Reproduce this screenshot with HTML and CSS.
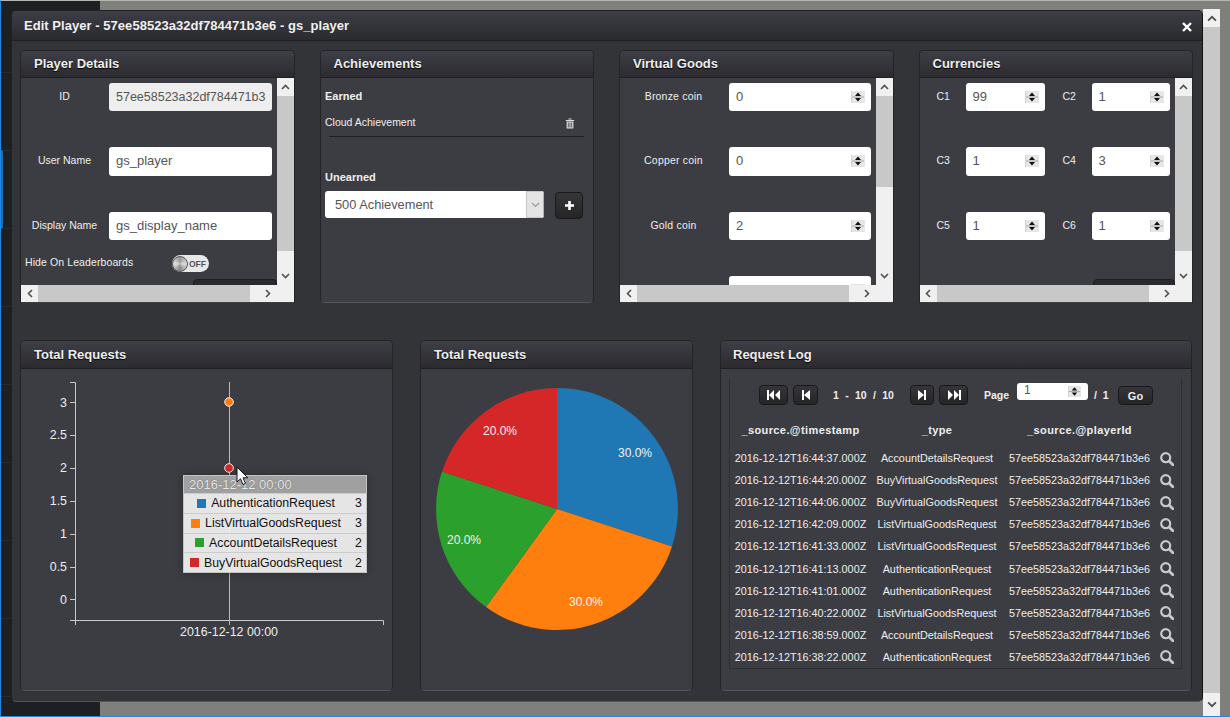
FILE: index.html
```html
<!DOCTYPE html>
<html lang="en">
<head>
<meta charset="utf-8">
<title>Edit Player</title>
<link rel="stylesheet" href="styles.css">
</head>
<body>
<svg class="defs" width="0" height="0" aria-hidden="true">
  <defs>
    <symbol id="up" viewBox="0 0 9 6"><path d="M1 5 4.500 1.500 8 5" fill="none" stroke="#505050" stroke-width="1.600"/></symbol>
    <symbol id="down" viewBox="0 0 9 6"><path d="M1 1 4.500 4.500 8 1" fill="none" stroke="#505050" stroke-width="1.600"/></symbol>
    <symbol id="selectdown" viewBox="0 0 9 6"><path d="M1 1 4.500 4.500 8 1" fill="none" stroke="#9a9a9a" stroke-width="1.200"/></symbol>
    <symbol id="left" viewBox="0 0 6 9"><path d="M5 1 1.500 4.500 5 8" fill="none" stroke="#505050" stroke-width="1.600"/></symbol>
    <symbol id="right" viewBox="0 0 6 9"><path d="M1 1 4.500 4.500 1 8" fill="none" stroke="#505050" stroke-width="1.600"/></symbol>
    <symbol id="spin" viewBox="0 0 14 12"><rect width="14" height="12" fill="#e6e6e6"/><rect x="0" y="0" width="1" height="12" fill="#d4d4d4"/><rect x="1" y="5.500" width="12" height="1" fill="#a8a8a8"/><path d="M7 1.500 10 5H4zM7 10.500 4 7h6z" fill="#111"/></symbol>
    <symbol id="search" viewBox="0 0 14 14"><circle cx="5.700" cy="5.700" r="4.500" fill="none" stroke="#c8c8c8" stroke-width="2.200"/><path d="M9 9 12.800 12.800" stroke="#c8c8c8" stroke-width="2.800" stroke-linecap="round"/></symbol>
  </defs>
</svg>

<aside class="sidebar">
  <div class="nav-item"></div>
  <div class="nav-item nav-active"></div>
  <div class="nav-item"></div>
  <div class="nav-item"></div>
  <div class="nav-item"></div>
  <div class="nav-item"></div>
  <div class="nav-item"></div>
  <div class="nav-item"></div>
  <div class="nav-item"></div>
</aside>

<div class="page-scroll">
  <span class="ps-arrow"><svg width="10" height="7"><use href="#up"/></svg></span>
  <span class="ps-thumb"></span>
  <span class="ps-arrow ps-down"><svg width="10" height="7"><use href="#down"/></svg></span>
</div>

<section class="modal">
  <header class="modal-head">
    <h1>Edit Player - 57ee58523a32df784471b3e6 - gs_player</h1>
    <svg class="close" width="10" height="10" viewBox="0 0 10 10"><path d="M1 1 9 9M9 1 1 9" stroke="#fff" stroke-width="2.400"/></svg>
  </header>
  <div class="modal-body">
    <div class="top-row">

      <article class="panel panel-scroll">
        <h2>Player Details</h2>
        <div class="scroll-body">
          <div class="scroll-content">
            <div class="row"><label>ID</label><div class="field readonly">57ee58523a32df784471b3</div></div>
            <div class="row"><label>User Name</label><div class="field">gs_player</div></div>
            <div class="row row-short"><label>Display Name</label><div class="field">gs_display_name</div></div>
            <div class="toggle-row">
              <span class="toggle-label">Hide On Leaderboards</span>
              <span class="toggle"><i class="knob"></i><b>OFF</b></span>
            </div>
            <div class="clip-btn clip-a"></div>
          </div>
          <div class="vbar">
            <span class="bar-arrow"><svg width="9" height="6"><use href="#up"/></svg></span>
            <span class="vthumb vthumb-long"></span>
            <span class="bar-arrow bar-end"><svg width="9" height="6"><use href="#down"/></svg></span>
          </div>
          <div class="hbar">
            <span class="bar-arrow"><svg width="6" height="9"><use href="#left"/></svg></span>
            <span class="hthumb"></span>
            <span class="bar-arrow bar-end"><svg width="6" height="9"><use href="#right"/></svg></span>
          </div>
          <div class="corner"></div>
        </div>
      </article>

      <article class="panel">
        <h2>Achievements</h2>
        <div class="ach-body">
          <h3>Earned</h3>
          <div class="ach-item">
            <span>Cloud Achievement</span>
            <svg width="10" height="11" viewBox="0 0 10 11"><path d="M3.500 1.500V.6h3v.9M.8 2h8.400v1H.8zM1.600 3.500h6.800V10a.6.6 0 0 1-.6.6H2.200a.6.6 0 0 1-.6-.6z" fill="#ddd"/><path d="M3.300 4.500v5M5 4.500v5M6.700 4.500v5" stroke="#3c3d42" stroke-width=".8"/></svg>
          </div>
          <h3 class="unearned">Unearned</h3>
          <div class="ach-add">
            <div class="select">
              <span>500 Achievement</span>
              <i class="select-arrow"><svg width="9" height="6"><use href="#selectdown"/></svg></i>
            </div>
            <span class="btn plus-btn"><svg width="11" height="11" viewBox="0 0 11 11"><path d="M5.500 1v9M1 5.500h9" stroke="#fff" stroke-width="2.600"/></svg></span>
          </div>
        </div>
      </article>

      <article class="panel panel-scroll">
        <h2>Virtual Goods</h2>
        <div class="scroll-body">
          <div class="scroll-content">
            <div class="row goods"><label>Bronze coin</label><div class="field num">0<svg class="spin" width="14" height="12"><use href="#spin"/></svg></div></div>
            <div class="row goods"><label>Copper coin</label><div class="field num">0<svg class="spin" width="14" height="12"><use href="#spin"/></svg></div></div>
            <div class="row goods"><label>Gold coin</label><div class="field num">2<svg class="spin" width="14" height="12"><use href="#spin"/></svg></div></div>
            <div class="row goods"><label></label><div class="field num"><svg class="spin" width="14" height="12"><use href="#spin"/></svg></div></div>
          </div>
          <div class="vbar">
            <span class="bar-arrow"><svg width="9" height="6"><use href="#up"/></svg></span>
            <span class="vthumb vthumb-short"></span>
            <span class="bar-arrow bar-end"><svg width="9" height="6"><use href="#down"/></svg></span>
          </div>
          <div class="hbar">
            <span class="bar-arrow"><svg width="6" height="9"><use href="#left"/></svg></span>
            <span class="hthumb"></span>
            <span class="bar-arrow bar-end"><svg width="6" height="9"><use href="#right"/></svg></span>
          </div>
          <div class="corner"></div>
        </div>
      </article>

      <article class="panel panel-scroll">
        <h2>Currencies</h2>
        <div class="scroll-body">
          <div class="scroll-content">
            <div class="cur-grid">
              <div class="cur"><label>C1</label><div class="field num">99<svg class="spin" width="14" height="12"><use href="#spin"/></svg></div></div>
              <div class="cur"><label>C2</label><div class="field num">1<svg class="spin" width="14" height="12"><use href="#spin"/></svg></div></div>
              <div class="cur cur-mid"><label>C3</label><div class="field num">1<svg class="spin" width="14" height="12"><use href="#spin"/></svg></div></div>
              <div class="cur cur-mid"><label>C4</label><div class="field num">3<svg class="spin" width="14" height="12"><use href="#spin"/></svg></div></div>
              <div class="cur cur-short"><label>C5</label><div class="field num">1<svg class="spin" width="14" height="12"><use href="#spin"/></svg></div></div>
              <div class="cur cur-short"><label>C6</label><div class="field num">1<svg class="spin" width="14" height="12"><use href="#spin"/></svg></div></div>
            </div>
            <div class="clip-btn clip-b"></div>
          </div>
          <div class="vbar">
            <span class="bar-arrow"><svg width="9" height="6"><use href="#up"/></svg></span>
            <span class="vthumb vthumb-long"></span>
            <span class="bar-arrow bar-end"><svg width="9" height="6"><use href="#down"/></svg></span>
          </div>
          <div class="hbar">
            <span class="bar-arrow"><svg width="6" height="9"><use href="#left"/></svg></span>
            <span class="hthumb"></span>
            <span class="bar-arrow bar-end"><svg width="6" height="9"><use href="#right"/></svg></span>
          </div>
          <div class="corner"></div>
        </div>
      </article>
    </div>

    <div class="bottom-row">
      <article class="panel">
        <h2>Total Requests</h2>
        <div class="chart-body">
          <svg class="chart" width="371" height="321" viewBox="21 369 371 321">
            <g class="axis">
              <path d="M70 382.500H75.500V620M70 620.500H383.500V625M75.500 620V625"/>
              <path d="M70 402.500h5M70 435.500h5M70 468.500h5M70 501.500h5M70 534.500h5M70 567.500h5M70 599.500h5"/>
            </g>
            <path class="guide" d="M229.500 382V625"/>
            <g class="tick-labels">
              <text x="67" y="406.500">3</text>
              <text x="67" y="439">2.5</text>
              <text x="67" y="472">2</text>
              <text x="67" y="505">1.5</text>
              <text x="67" y="538">1</text>
              <text x="67" y="571">0.5</text>
              <text x="67" y="603.500">0</text>
            </g>
            <text class="x-label" x="229" y="636">2016-12-12 00:00</text>
            <circle cx="229" cy="402" r="4.300" fill="#ff7f0e" stroke="#eee" stroke-width="1"/>
            <circle cx="229" cy="468" r="4.300" fill="#d62728" stroke="#eee" stroke-width="1"/>
          </svg>
          <div class="tooltip">
            <div class="tt-head">2016-12-12 00:00</div>
            <div class="tt-row"><span class="tt-name"><i class="sw sw-blue"></i>AuthenticationRequest</span><b>3</b></div>
            <div class="tt-row"><span class="tt-name"><i class="sw sw-orange"></i>ListVirtualGoodsRequest</span><b>3</b></div>
            <div class="tt-row"><span class="tt-name"><i class="sw sw-green"></i>AccountDetailsRequest</span><b>2</b></div>
            <div class="tt-row"><span class="tt-name"><i class="sw sw-red"></i>BuyVirtualGoodsRequest</span><b>2</b></div>
          </div>
          <svg class="cursor" width="13" height="20" viewBox="0 0 13 20"><path d="M1 1V16L4.500 12.800 7 18.500 9.500 17.400 7 11.800H11.800z" fill="#fff" stroke="#111" stroke-width="1"/></svg>
        </div>
      </article>

      <article class="panel">
        <h2>Total Requests</h2>
        <div class="chart-body">
          <svg class="chart" width="271" height="321" viewBox="421 369 271 321">
            <path d="M557 509V388A121 121 0 0 1 672 546.400Z" fill="#1f77b4"/>
            <path d="M557 509 672 546.400A121 121 0 0 1 486 607Z" fill="#ff7f0e"/>
            <path d="M557 509 486 607A121 121 0 0 1 442 471.600Z" fill="#2ca02c"/>
            <path d="M557 509 442 471.600A121 121 0 0 1 557 388Z" fill="#d62728"/>
            <g class="pie-labels">
              <text x="635" y="457">30.0%</text>
              <text x="586" y="606">30.0%</text>
              <text x="464" y="544">20.0%</text>
              <text x="500" y="435">20.0%</text>
            </g>
          </svg>
        </div>
      </article>

      <article class="panel log-panel">
        <h2>Request Log</h2>
        <div class="log-body">
          <div class="log-frame">
            <div class="pager">
              <span class="btn pg-wide"><svg width="14" height="10" viewBox="0 0 14 10"><path d="M0 0h2v10H0zM7 0v10L2 5zM13 0v10L8 5z" fill="#fff"/></svg></span>
              <span class="btn pg-narrow"><svg width="8" height="10" viewBox="0 0 8 10"><path d="M0 0h2v10H0zM8 0v10L2 5z" fill="#fff"/></svg></span>
              <span class="pg-range"><b>1</b><b>-</b><b>10</b><b>/</b><b>10</b></span>
              <span class="btn pg-next"><svg width="8" height="10" viewBox="0 0 8 10"><path d="M8 0H6v10h2zM0 0v10l6-5z" fill="#fff"/></svg></span>
              <span class="btn pg-wide"><svg width="14" height="10" viewBox="0 0 14 10"><path d="M14 0h-2v10h2zM7 0v10l5-5zM1 0v10l5-5z" fill="#fff"/></svg></span>
              <span class="pg-page">Page</span>
              <div class="pg-input">1<svg class="spin" width="13" height="13"><use href="#spin"/></svg></div>
              <span class="pg-total">/ 1</span>
              <span class="btn pg-go">Go</span>
            </div>
            <table class="log">
              <thead>
                <tr><th class="c1">_source.@timestamp</th><th class="c2">_type</th><th class="c3">_source.@playerId</th><th></th></tr>
              </thead>
              <tbody>
                <tr><td>2016-12-12T16:44:37.000Z</td><td>AccountDetailsRequest</td><td>57ee58523a32df784471b3e6</td><td><svg width="14" height="14"><use href="#search"/></svg></td></tr>
                <tr><td>2016-12-12T16:44:20.000Z</td><td>BuyVirtualGoodsRequest</td><td>57ee58523a32df784471b3e6</td><td><svg width="14" height="14"><use href="#search"/></svg></td></tr>
                <tr><td>2016-12-12T16:44:06.000Z</td><td>BuyVirtualGoodsRequest</td><td>57ee58523a32df784471b3e6</td><td><svg width="14" height="14"><use href="#search"/></svg></td></tr>
                <tr><td>2016-12-12T16:42:09.000Z</td><td>ListVirtualGoodsRequest</td><td>57ee58523a32df784471b3e6</td><td><svg width="14" height="14"><use href="#search"/></svg></td></tr>
                <tr><td>2016-12-12T16:41:33.000Z</td><td>ListVirtualGoodsRequest</td><td>57ee58523a32df784471b3e6</td><td><svg width="14" height="14"><use href="#search"/></svg></td></tr>
                <tr><td>2016-12-12T16:41:13.000Z</td><td>AuthenticationRequest</td><td>57ee58523a32df784471b3e6</td><td><svg width="14" height="14"><use href="#search"/></svg></td></tr>
                <tr><td>2016-12-12T16:41:01.000Z</td><td>AuthenticationRequest</td><td>57ee58523a32df784471b3e6</td><td><svg width="14" height="14"><use href="#search"/></svg></td></tr>
                <tr><td>2016-12-12T16:40:22.000Z</td><td>ListVirtualGoodsRequest</td><td>57ee58523a32df784471b3e6</td><td><svg width="14" height="14"><use href="#search"/></svg></td></tr>
                <tr><td>2016-12-12T16:38:59.000Z</td><td>AccountDetailsRequest</td><td>57ee58523a32df784471b3e6</td><td><svg width="14" height="14"><use href="#search"/></svg></td></tr>
                <tr><td>2016-12-12T16:38:22.000Z</td><td>AuthenticationRequest</td><td>57ee58523a32df784471b3e6</td><td><svg width="14" height="14"><use href="#search"/></svg></td></tr>
              </tbody>
            </table>
          </div>
        </div>
      </article>
    </div>
  </div>
</section>
</body>
</html>
```
FILE: styles.css
```css
* { box-sizing: border-box; }
html, body { margin: 0; height: 100%; overflow: hidden; }
body {
  position: relative;
  width: 1230px;
  height: 717px;
  background: #7f7f7c;
  border-top: 1px solid #b5b5b0;
  border-left: 1px solid #1e88e5;
  border-bottom: 1px solid #1e88e5;
  font-family: "Liberation Sans", Arial, sans-serif;
  color: #eee;
  font-size: 11px;
}
.defs { position: absolute; }
h1, h2, h3 { margin: 0; }

.sidebar {
  position: absolute;
  left: 0;
  top: -1px;
  width: 99px;
  height: 717px;
  background: #1c2023;
  overflow: hidden;
  padding-top: 72px;
}
.nav-item { height: 78px; border-top: 1px solid #282c30; }
.nav-active { border-left: 2px solid #1a6fae; }

.page-scroll {
  position: absolute;
  left: 1202px;
  top: 8px;
  bottom: 0;
  width: 17px;
  display: flex;
  flex-direction: column;
  background: #c8c8c8;
}
.ps-arrow { height: 18px; background: #f0f0f0; display: flex; align-items: center; justify-content: center; flex: none; }
.ps-thumb { flex: 1; }
.ps-down { height: 23px; }

.modal {
  position: absolute;
  left: 10px;
  top: 9px;
  width: 1192px;
  height: 692px;
  background: #333438;
  border: 1px solid #202124;
  border-bottom-color: #55565b;
  border-right-color: #111;
  border-radius: 5px;
}
.modal-head {
  height: 30px;
  display: flex;
  align-items: center;
  justify-content: space-between;
  padding: 0 10px 0 12px;
  background: linear-gradient(#3d3d46, #2a2a2e);
  border-bottom: 1px solid #1f2023;
  border-radius: 4px 4px 0 0;
}
.modal-head h1 { font-size: 13px; font-weight: bold; color: #f0f0f0; letter-spacing: .04px; }
.close { margin-top: 2px; }

.modal-body { padding: 9px 0 0 8px; }
.top-row { display: grid; grid-template-columns: repeat(4, 274.5px); column-gap: 25px; height: 253px; }
.bottom-row { display: grid; grid-template-columns: 373px 273px 473px; column-gap: 27px; height: 351px; margin-top: 37px; }

.panel {
  display: flex;
  flex-direction: column;
  background: #3c3d42;
  border: 1px solid #232427;
  border-bottom-color: #55565b;
  border-radius: 5px;
  overflow: hidden;
  min-width: 0;
}
.panel-scroll { border-radius: 5px 5px 0 0; border-bottom: 0; }
.log-panel { margin-right: 1px; }
.panel h2 {
  flex: none;
  height: 27px;
  line-height: 25px;
  padding-left: 13px;
  font-size: 13px;
  font-weight: bold;
  color: #eee;
  text-shadow: 0 1px 1px #000;
  background: linear-gradient(#3e3e47, #2b2b2f);
  border-bottom: 1px solid #1f2023;
}
.bottom-row .panel h2 { height: 28px; line-height: 27px; }
.bottom-row .log-panel h2 { padding-left: 12px; }

.scroll-body {
  flex: none;
  display: grid;
  grid-template-columns: 1fr 17px;
  grid-template-rows: 207px 17px;
  min-height: 0;
}
.scroll-content { overflow: hidden; padding-top: 5px; min-width: 0; }
.vbar { display: flex; flex-direction: column; background: #f0f0f0; }
.hbar { display: flex; background: #f0f0f0; }
.corner { background: #f0f0f0; }
.bar-arrow { flex: none; width: 17px; height: 18px; display: flex; align-items: center; justify-content: center; }
.hbar .bar-arrow { height: 17px; }
.bar-end { margin-top: auto; }
.hbar .bar-end { margin-top: 0; margin-left: auto; }
.vthumb { background: #c8c8c8; flex: none; }
.vthumb-long { height: 155px; }
.vthumb-short { height: 91px; }
.hthumb { background: #c8c8c8; width: 212px; flex: none; }

.row { display: flex; height: 64px; align-items: flex-start; }
.row:nth-child(2) { height: 65px; }
.row:nth-child(2) .field { height: 29px; }
.row label { width: 87px; margin-right: 1px; flex: none; text-align: center; font-size: 10.5px; line-height: 26px; color: #eee; }
.row-short { height: 43px; }
.field {
  position: relative;
  width: 163px;
  height: 28px;
  flex: none;
  padding-left: 7px;
  line-height: 28px;
  font-size: 13px;
  color: #555;
  background: #fff;
  border-radius: 3px;
  overflow: hidden;
  white-space: nowrap;
}
.readonly { background: #eee; font-size: 12.5px; }
.goods label { width: 107px; margin-right: 2px; letter-spacing: .2px; }
.goods .field { width: 142px; }
.spin { position: absolute; right: 6px; top: 8px; }

.toggle-row { display: flex; align-items: flex-start; height: 24px; padding-left: 4px; }
.toggle-label { font-size: 10.5px; line-height: 14px; width: 147px; flex: none; letter-spacing: .1px; }
.toggle {
  display: flex;
  align-items: center;
  width: 37px;
  height: 17px;
  background: #e8e8e8;
  border-radius: 9px;
  color: #555;
  font-size: 8.5px;
}
.toggle b { margin-left: 1px; }
.knob { width: 16px; height: 16px; flex: none; border-radius: 50%; background: conic-gradient(#999, #ddd, #888, #ddd, #999); border: 1px solid #555; }
.clip-btn { height: 10px; border: 1px solid #1c1d1f; border-radius: 4px 4px 0 0; background: #2b2b2e; }
.clip-a { margin-left: 172px; }
.clip-b { margin-left: 173px; }

.cur-grid { display: grid; grid-template-columns: 143px 113px; }
.cur { display: flex; height: 64px; align-items: flex-start; padding-left: 17px; }
.cur:nth-child(even) { padding-left: 0; }
.cur label { width: 29px; flex: none; font-size: 10.5px; line-height: 26px; }
.cur .field { width: 79px; }
.cur:nth-child(even) .field { width: 78px; }
.cur-mid { height: 65px; }
.cur-mid .field { height: 29px; }
.cur-short { height: 67px; }

.ach-body { padding: 6px 9px 0 4.500px; flex: 1; }
.ach-body h3 { font-size: 11px; font-weight: bold; line-height: 25px; height: 25px; color: #eee; }
.ach-item {
  display: flex;
  justify-content: space-between;
  margin-top: 1px;
  margin-left: 4px;
  height: 27px;
  border-bottom: 1px solid #1f2023;
  line-height: 25px;
  font-size: 10.5px;
}
.ach-item span { margin-left: -4px; }
.ach-item svg { margin: 8px 9px 0 0; }
.unearned { margin-top: 28px; }
.ach-add { display: flex; align-items: flex-start; margin-top: 1px; }
.select {
  display: flex;
  justify-content: space-between;
  width: 219px;
  height: 27px;
  padding-left: 10px;
  line-height: 27px;
  font-size: 12.8px;
  color: #555;
  background: #fff;
  border-radius: 3px;
  overflow: hidden;
}
.select-arrow { width: 18px; background: #e4e4e4; border: 1px solid #c6c6c6; border-right-color: #b0b0b0; display: flex; align-items: center; justify-content: center; }
.btn {
  display: inline-flex;
  align-items: center;
  justify-content: center;
  flex: none;
  background: linear-gradient(#36363a, #252527);
  border: 1px solid #19191b;
  border-radius: 4px;
  color: #eee;
  font-weight: bold;
  font-size: 11px;
}
.plus-btn { width: 28px; height: 27px; margin: 1px 0 0 11px; }

.chart-body { position: relative; flex: 1; min-height: 0; }
.chart { display: block; }
.axis path { fill: none; stroke: #c8c8c8; stroke-width: 1; }
.guide { stroke: #bbb; stroke-width: 1; }
.tick-labels text { font: 12.4px "Liberation Sans", Arial, sans-serif; fill: #eee; text-anchor: end; }
.x-label { font: 12.4px "Liberation Sans", Arial, sans-serif; fill: #eee; text-anchor: middle; }
.pie-labels text { font: 12px "Liberation Sans", Arial, sans-serif; fill: #f2f2f2; text-anchor: middle; }

.tooltip {
  position: absolute;
  left: 162px;
  top: 106px;
  width: 184px;
  height: 98px;
  background: rgba(238, 238, 238, .95);
  border: 1px solid #c4c4c4;
  box-shadow: 0 0 8px rgba(0, 0, 0, .3);
  color: #111;
  font-size: 12.3px;
}
.tt-head { height: 17px; line-height: 18px; padding-left: 5px; background: #a0a0a0; color: #e8e8e8; font-size: 13px; text-shadow: 0 0 1px #555; }
.tt-row { display: flex; align-items: center; height: 19.75px; border-top: 1px solid #ccc; }
.tt-name { width: 164px; flex: none; display: flex; align-items: center; justify-content: center; }
.tt-row b { font-weight: normal; margin-left: 7px; }
.sw { width: 9px; height: 9px; margin-right: 5px; flex: none; }
.sw-blue { background: #1f77b4; }
.sw-orange { background: #ff7f0e; }
.sw-green { background: #2ca02c; }
.sw-red { background: #d62728; }
.cursor { position: absolute; left: 215px; top: 97px; }

.log-body { flex: 1; padding: 9px 9px 21px 8px; }
.log-frame { height: 291px; width: 453px; border: 1px solid #2e2f33; border-top: 0; }
.pager { display: flex; align-items: flex-start; height: 37px; padding-left: 29px; font-size: 10.5px; font-weight: bold; }
.pg-wide { width: 29px; height: 20px; margin-top: 7px; }
.pg-narrow { width: 25px; height: 20px; margin: 7px 0 0 5px; }
.pg-next { width: 24px; height: 20px; margin: 7px 5px 0 0; }
.pg-range { display: flex; width: 61px; margin: 0 16px 0 15px; justify-content: space-between; line-height: 34px; }
.pg-page { margin-left: 16px; width: 26px; line-height: 34px; }
.pg-input {
  position: relative;
  width: 71px;
  height: 17px;
  margin: 5px 0 0 7px;
  padding-left: 7px;
  font-size: 12px;
  font-weight: normal;
  line-height: 15px;
  color: #555;
  background: #fff;
  border-radius: 3px;
}
.pg-input .spin { top: 2px; right: 7px; }
.pg-total { width: 30px; padding-left: 6px; line-height: 34px; word-spacing: 3px; }
.pg-go { width: 35px; height: 19px; margin-top: 8px; }

.log { width: 451px; border-collapse: collapse; table-layout: fixed; }
.log th { height: 32px; padding: 0 0 3px; font-size: 11px; font-weight: bold; letter-spacing: .4px; color: #eee; text-align: center; }
.log td { height: 22.1px; padding: 0; font-size: 10.8px; text-align: center; color: #eee; white-space: nowrap; }
.log svg { display: block; margin: 1px 0 0 4px; }
.c1 { width: 141px; }
.c2 { width: 132px; }
.c3 { width: 153px; }
```
